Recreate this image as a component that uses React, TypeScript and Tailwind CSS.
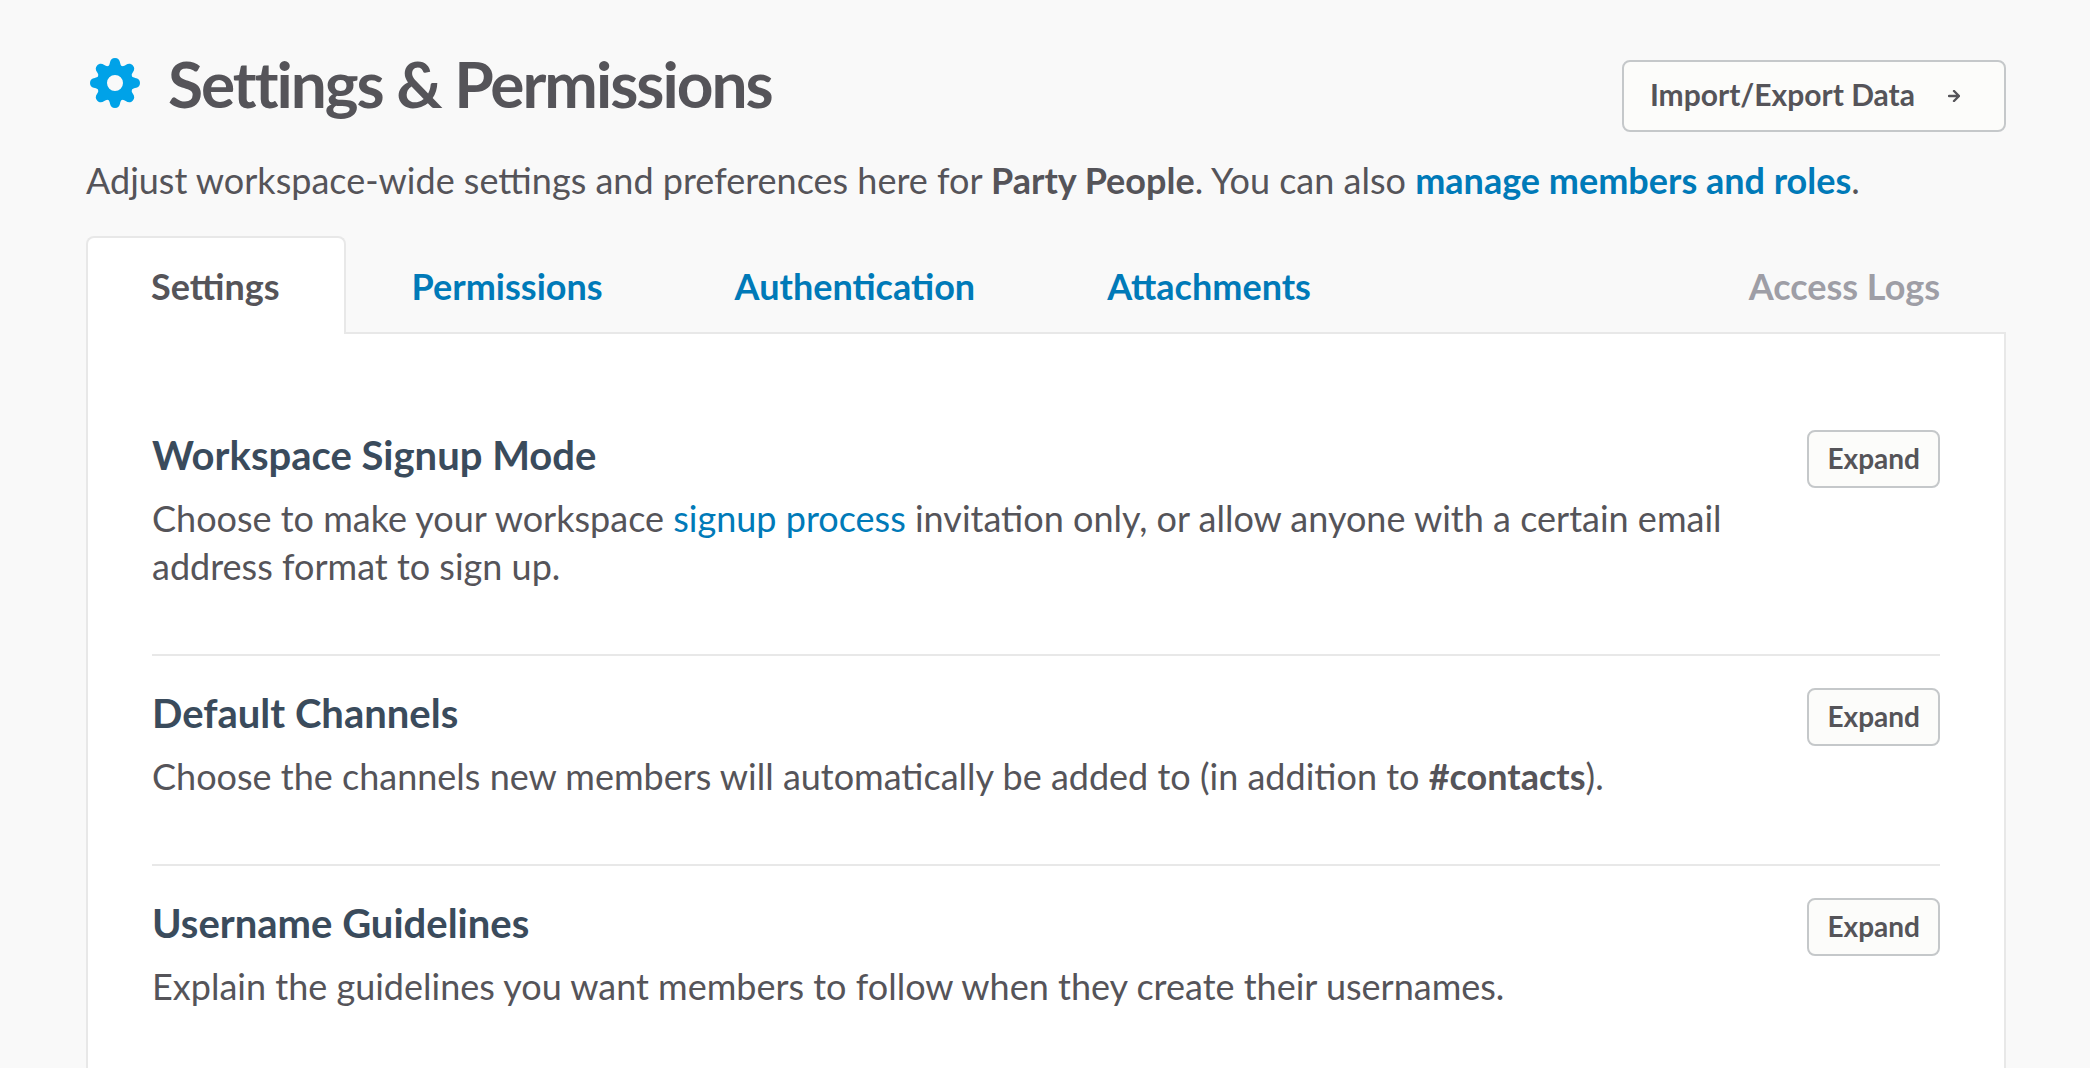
import React from 'react';

const sections = [
  {
    title: 'Workspace Signup Mode',
    body: (
      <>
        Choose to make your workspace{' '}
        <a href="#signup" className="text-[#007ab8]">signup process</a> invitation only, or allow anyone with a certain email address format to sign up.
      </>
    ),
  },
  {
    title: 'Default Channels',
    body: (
      <>
        Choose the channels new members will automatically be added to (in addition to <b>#contacts</b>).
      </>
    ),
  },
  {
    title: 'Username Guidelines',
    body: <>Explain the guidelines you want members to follow when they create their usernames.</>,
  },
];

const tabs = ['Permissions', 'Authentication', 'Attachments'];

function Gear() {
  const teeth = [0, 45, 90, 135, 180, 225, 270, 315];
  return (
    <svg viewBox="0 0 50 50" className="-mt-0.5 size-[50px] shrink-0" fill="#00a2e8" aria-hidden="true">
      {teeth.map((a) => (
        <path key={a} transform={`rotate(${a} 25 25)`} d="M17.800 8.300C19.200 7.800 19.600 6.300 19.900 4.800C20.400 1.800 22 0 25 0C28 0 29.600 1.800 30.100 4.800C30.400 6.300 30.800 7.800 32.200 8.300L28 15H22Z" />
      ))}
      <path fillRule="evenodd" d="M25 7a18 18 0 1 0 0 36a18 18 0 1 0 0-36zM25 17a8 8 0 1 1 0 16a8 8 0 1 1 0-16z" />
    </svg>
  );
}

export default function App() {
  return (
    <div className="flex h-screen flex-col overflow-hidden bg-[#f9f9f9] pt-[52px] pr-[84px] pl-[86px] font-['Lato',sans-serif] text-[36px] leading-[48px] text-[#555459]">
      <header className="flex shrink-0 items-start justify-between pt-2">
        <h1 className="-mt-2 flex items-center gap-7 pl-1 text-[64px] leading-[64px] font-bold tracking-[-2px]">
          <Gear />
          Settings &amp; Permissions
        </h1>
        <button className="flex h-[72px] items-center gap-[33px] rounded-lg border-2 border-[#c5c8ca] bg-[#fcfcfa] pr-11 pb-1 pl-[26px] text-[30px] font-bold">
          Import/Export Data
          <svg viewBox="0 0 12 12" className="mt-1 size-3" fill="none" stroke="currentColor" strokeWidth="2.400" strokeLinecap="round" strokeLinejoin="round" aria-hidden="true">
            <path d="M1 6H11M6 1L11 6L6 11" />
          </svg>
        </button>
      </header>
      <p className="mt-6 shrink-0">
        Adjust workspace-wide settings and preferences here for <b>Party People</b>. You can also{' '}
        <a href="#members" className="font-bold text-[#007ab8]">manage members and roles</a>.
      </p>
      <nav className="relative z-10 mt-8 -mb-0.5 flex h-[98px] shrink-0 items-stretch font-bold">
        <a href="#settings" className="flex items-center rounded-t-lg border-2 border-b-0 border-[#e8e8e8] bg-white pr-16 pl-[63px]">Settings</a>
        {tabs.map((t) => (
          <a key={t} href={`#${t}`} className="flex items-center border-t-2 border-transparent px-[66px] text-[#007ab8]">{t}</a>
        ))}
        <a href="#logs" className="ml-auto flex items-center border-t-2 border-transparent px-[66px] text-[#9e9ea6]">Access Logs</a>
      </nav>
      <main className="flex-1 border-2 border-b-0 border-[#e8e8e8] bg-white px-16 pt-16">
        {sections.map((s) => (
          <section key={s.title} className="flex items-start justify-between border-b-2 border-[#e8e8e8] pt-8 pb-16 last:border-b-0">
            <div className="max-w-[1590px]">
              <h2 className="text-[40px] leading-[50px] font-bold text-[#3a4b5c]">{s.title}</h2>
              <p className="mt-3.5">{s.body}</p>
            </div>
            <button className="h-[58px] rounded-lg border-2 border-[#c5c8ca] bg-[#fcfcfa] px-[18px] pb-0.5 text-[28px] font-bold">Expand</button>
          </section>
        ))}
      </main>
    </div>
  );
}
